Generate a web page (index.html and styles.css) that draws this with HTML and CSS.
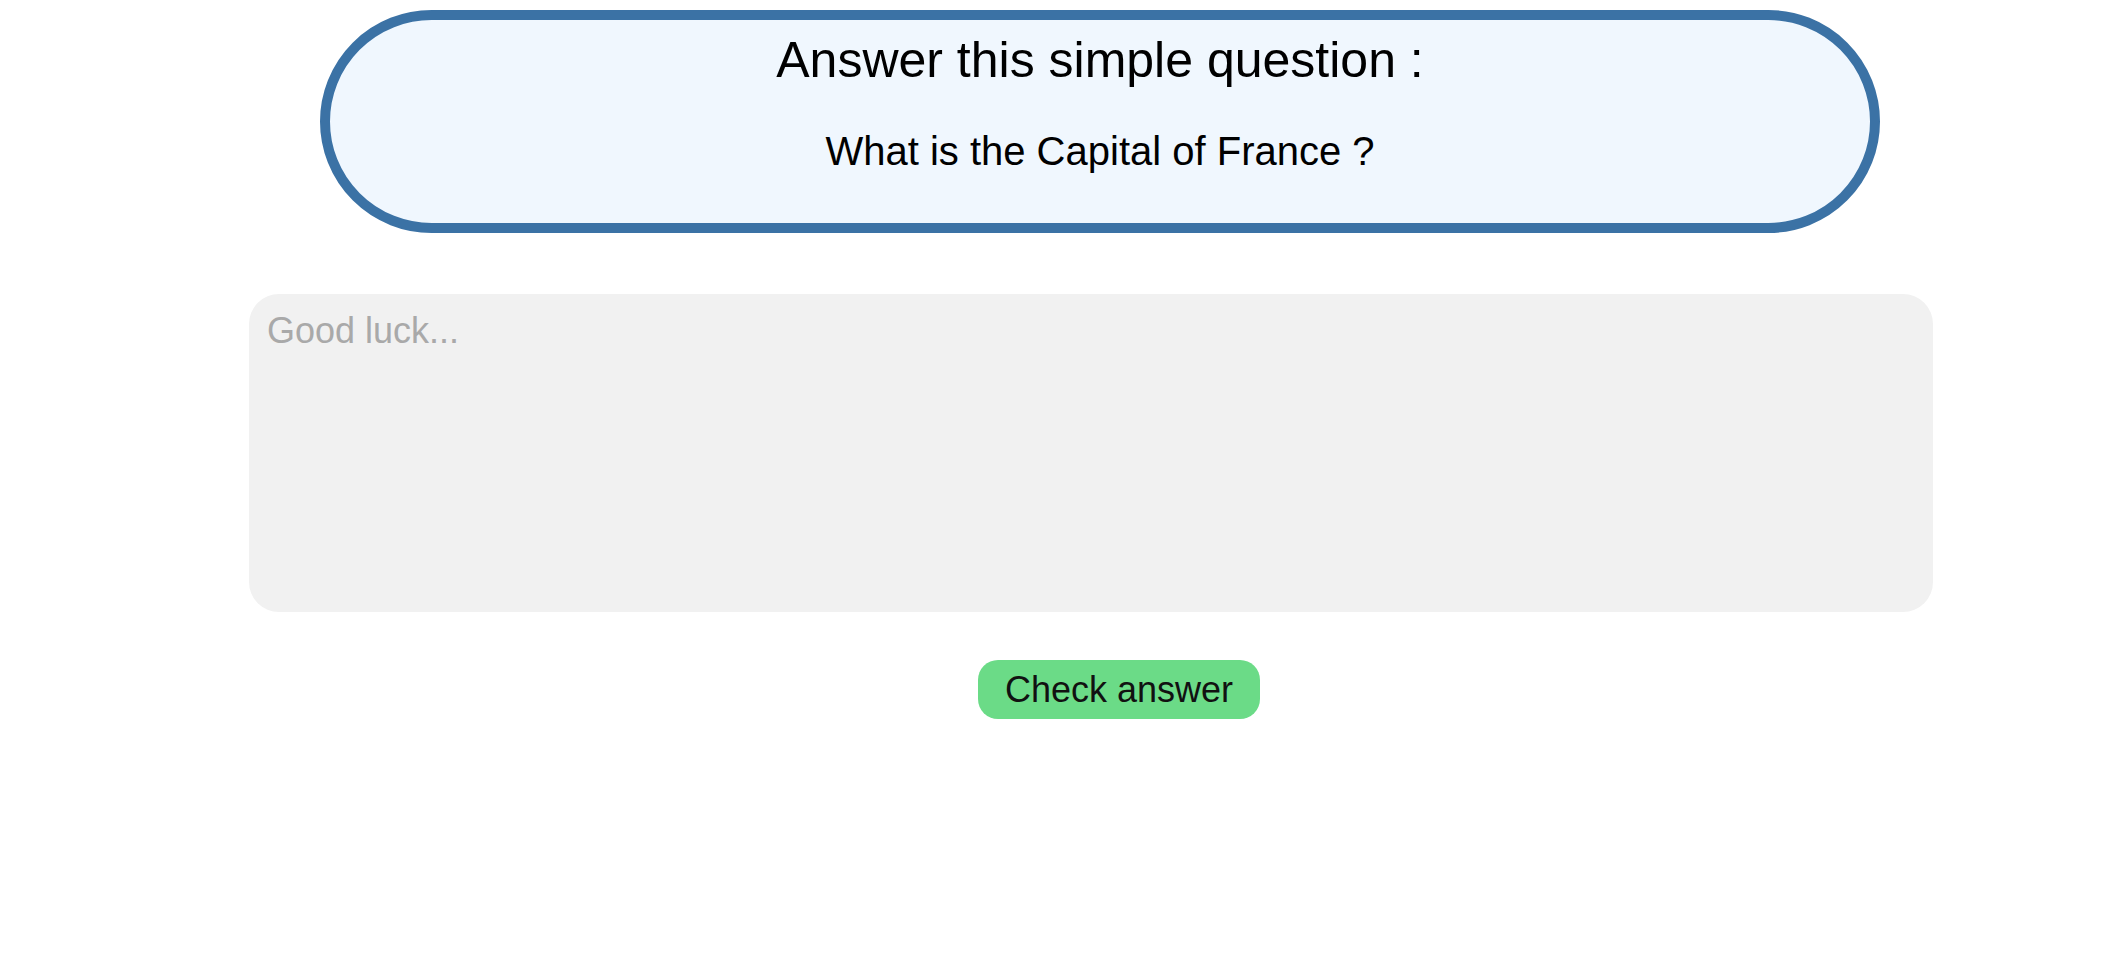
FILE: index.html
```html
<!DOCTYPE html>
<html lang="en">
<head>
<meta charset="utf-8">
<title>Quiz</title>
<link rel="stylesheet" href="styles.css">
</head>
<body>
<main class="page">
  <section class="question-box">
    <h1 class="question-title">Answer this simple question :</h1>
    <p class="question-text">What is the Capital of France ?</p>
  </section>
  <textarea class="answer" placeholder="Good luck..."></textarea>
  <button class="check-btn" type="button">Check answer</button>
</main>
</body>
</html>
```

FILE: styles.css
```css
html, body {
  margin: 0;
  padding: 0;
  background: #ffffff;
}

body {
  padding: 8px;
  font-family: "Liberation Sans", Arial, Helvetica, sans-serif;
  color: #000;
}

.page {
  display: flex;
  flex-direction: column;
  align-items: flex-start;
}

.question-box {
  box-sizing: border-box;
  margin: 2px 0 0 312px;
  width: 1560px;
  height: 223px;
  border: 10px solid #3b72a5;
  border-radius: 112px;
  background: #f0f7fe;
  padding-top: 15px;
  display: flex;
  flex-direction: column;
  align-items: center;
}

.question-title {
  margin: 0;
  font-size: 50px;
  font-weight: 400;
  line-height: 50px;
}

.question-text {
  margin: 46px 0 0;
  font-size: 40px;
  line-height: 40px;
}

.answer {
  box-sizing: border-box;
  margin: 61px 0 0 241px;
  width: 1684px;
  height: 318px;
  border: none;
  outline: none;
  resize: none;
  border-radius: 30px;
  background: #f1f1f1;
  padding: 16px 18px;
  font-family: "Liberation Sans", Arial, Helvetica, sans-serif;
  font-size: 36px;
  color: #000;
}

.answer::placeholder {
  color: #a9a9a9;
}

.check-btn {
  margin: 48px 0 0 970px;
  box-sizing: border-box;
  height: 59px;
  padding: 0 27px;
  border: none;
  border-radius: 20px;
  background: #6bdb87;
  color: #111;
  font-family: "Liberation Sans", Arial, Helvetica, sans-serif;
  font-size: 36px;
  line-height: 59px;
  cursor: pointer;
}
```
